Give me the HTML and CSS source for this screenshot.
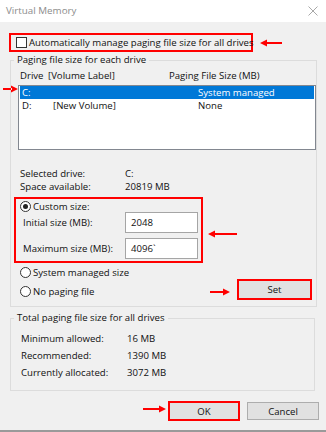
FILE: index.html
```html
<!DOCTYPE html>
<html>
<head>
<meta charset="utf-8">
<link rel="stylesheet" href="styles.css">
</head>
<body>
<div class="titlebar">
  <span class="title">Virtual Memory</span>
  <svg class="close" width="10" height="10" viewBox="0 0 10 10"><path d="M0.5 0.5 L9.5 9.5 M9.5 0.5 L0.5 9.5" stroke="#a8a8a8" stroke-width="1" fill="none"/></svg>
</div>
<div class="content">
  <div class="autocheck hl">
    <span class="checkbox"></span>
    <span class="autolabel">Automatically manage paging file size for all drives</span>
  </div>

  <fieldset class="group group-drives">
    <legend>Paging file size for each drive</legend>
    <div class="list-head">
      <span class="c-drive">Drive</span><span class="c-label">[Volume Label]</span><span>Paging File Size (MB)</span>
    </div>
    <div class="listbox">
      <div class="lrow selected"><span class="c-d">C:</span><span class="c-l"></span><span>System managed</span></div>
      <div class="lrow"><span class="c-d">D:</span><span class="c-l">[New Volume]</span><span>None</span></div>
    </div>
    <div class="info">
      <div class="irow"><span class="ilabel">Selected drive:</span><span>C:</span></div>
      <div class="irow"><span class="ilabel">Space available:</span><span>20819 MB</span></div>
    </div>
    <div class="custom hl">
      <div class="radio-row first"><span class="radio checked"></span><span>Custom size:</span></div>
      <div class="field-row"><span class="flabel">Initial size (MB):</span><span class="input">2048</span></div>
      <div class="field-row second"><span class="flabel">Maximum size (MB):</span><span class="input">4096`</span></div>
    </div>
    <div class="bottom-row">
      <div class="radios">
        <div class="radio-row"><span class="radio"></span><span>System managed size</span></div>
        <div class="radio-row"><span class="radio"></span><span>No paging file</span></div>
      </div>
      <div class="btn set hl-btn">Set</div>
    </div>
  </fieldset>

  <fieldset class="group group-total">
    <legend>Total paging file size for all drives</legend>
    <div class="trow"><span class="tlabel">Minimum allowed:</span><span>16 MB</span></div>
    <div class="trow"><span class="tlabel">Recommended:</span><span>1390 MB</span></div>
    <div class="trow"><span class="tlabel">Currently allocated:</span><span>3072 MB</span></div>
  </fieldset>

  <div class="actions">
    <div class="btn ok hl-btn">OK</div>
    <div class="btn cancel">Cancel</div>
  </div>
</div>

<svg class="arrow a1" width="22" height="8" viewBox="0 0 22 8"><path d="M7 3 H22 V5 H7 Z M0 4 L7 0.5 V7.5 Z" fill="#f00"/></svg>
<svg class="arrow a2" width="15" height="8" viewBox="0 0 15 8"><path d="M0 3 H9 V5 H0 Z M15 4 L8 0.5 V7.5 Z" fill="#f00"/></svg>
<svg class="arrow a3" width="29" height="8" viewBox="0 0 29 8"><path d="M7 3 H29 V5 H7 Z M0 4 L7 0.5 V7.5 Z" fill="#f00"/></svg>
<svg class="arrow a4" width="20" height="8" viewBox="0 0 20 8"><path d="M0 3 H13 V5 H0 Z M20 4 L13 0.5 V7.5 Z" fill="#f00"/></svg>
<svg class="arrow a5" width="23" height="8" viewBox="0 0 23 8"><path d="M0 3 H16 V5 H0 Z M23 4 L16 0.5 V7.5 Z" fill="#f00"/></svg>
</body>
</html>
```
FILE: styles.css
```css
* { box-sizing: border-box; }
html, body { margin: 0; padding: 0; }
body {
  width: 326px;
  height: 432px;
  background: #f0f0f0;
  font-family: "Open Sans", "Noto Sans", sans-serif;
  font-size: 9.6px;
  color: #111;
  position: relative;
  overflow: hidden;
  border-bottom: 2px solid #9a9a9a;
}
.titlebar {
  height: 22px;
  background: #fff;
  display: flex;
  align-items: center;
  justify-content: space-between;
  padding: 0 8px 2px 6px;
}
.title { color: #8c8c8c; font-size: 9.8px; }
.close { margin-top: 1px; }

.content { padding: 11px 11px 0 10px; }

.hl { border: 2px solid #f00; }
.autocheck {
  margin-left: -1px;
  width: 244px;
  height: 19px;
  display: flex;
  align-items: center;
  padding-left: 5px;
}
.checkbox {
  width: 11px;
  height: 11px;
  border: 1px solid #333;
  background: #fff;
  flex: none;
}
.autolabel { margin-left: 2px; white-space: nowrap; }

.group {
  margin: 0;
  border: 1px solid #dcdcdc;
  width: 305px;
  padding: 0 0 0 3px;
}
.group legend {
  padding: 0 3px;
  line-height: 14px;
  height: 14px;
}
.group-drives { margin-top: 1px; padding-bottom: 5px; }

.list-head {
  display: flex;
  padding-left: 6px;
  margin-top: 2px;
  line-height: 14px;
  height: 14px;
  white-space: nowrap;
}
.c-drive { width: 28px; flex: none; }
.c-label { width: 121px; flex: none; }

.listbox {
  margin: 2px 0 0 4px;
  width: 298px;
  height: 65px;
  border: 1px solid #828790;
  background: #fff;
  padding: 0 1px;
}
.lrow {
  display: flex;
  height: 13px;
  line-height: 13px;
  padding-left: 2px;
  white-space: nowrap;
}
.lrow.selected { background: #0078d7; color: #fff; }
.c-d { width: 31px; flex: none; }
.c-l { width: 145px; flex: none; }

.info { margin-top: 17px; padding-left: 6px; }
.irow { display: flex; height: 13px; line-height: 13px; white-space: nowrap; }
.ilabel { width: 105px; flex: none; }

.custom {
  margin-top: 4px;
  width: 189px;
  height: 66px;
  padding: 1px 0 2px 4px;
}
.radio-row {
  display: flex;
  align-items: center;
  height: 19px;
  padding-left: 2px;
  white-space: nowrap;
}
.radio-row.first { height: 12px; padding-left: 0; }
.radio {
  width: 11px;
  height: 11px;
  border: 1px solid #333;
  border-radius: 50%;
  background: #fff;
  margin-right: 2px;
  flex: none;
  display: flex;
  align-items: center;
  justify-content: center;
}
.radio.checked::after {
  content: "";
  width: 5px;
  height: 5px;
  border-radius: 50%;
  background: #222;
}
.field-row {
  display: flex;
  align-items: center;
  height: 21px;
  white-space: nowrap;
}
.field-row.second { margin-top: 5px; }
.flabel { width: 105px; flex: none; padding-left: 3px; }
.input {
  width: 73px;
  height: 21px;
  flex: none;
  border: 1px solid #a5a5a5;
  background: #fff;
  padding-left: 5px;
  line-height: 19px;
}

.bottom-row { display: flex; justify-content: space-between; }
.bottom-row .radio-row { padding-left: 6px; }
.btn {
  display: flex;
  align-items: center;
  justify-content: center;
  background: #e1e1e1;
}
.hl-btn { border: 2px solid #f00; }
.set {
  width: 75px;
  height: 21px;
  margin: 16px 4px 0 0;
}

.group-total { margin-top: 4px; padding-top: 5px; padding-bottom: 9px; }
.trow { display: flex; height: 17px; line-height: 17px; padding-left: 7px; white-space: nowrap; }
.tlabel { width: 106px; flex: none; }

.actions {
  display: flex;
  justify-content: flex-end;
  align-items: flex-start;
  gap: 7px;
  margin: 10px -4px 0 0;
}
.ok { width: 72px; height: 20px; }
.cancel {
  width: 72px;
  height: 18px;
  margin-top: 1px;
  border: 1px solid #adadad;
}

.arrow { position: absolute; }
.a1 { left: 260px; top: 39px; }
.a2 { left: 3px; top: 85px; }
.a3 { left: 208px; top: 230px; }
.a4 { left: 210px; top: 288px; }
.a5 { left: 143px; top: 405px; }
```
